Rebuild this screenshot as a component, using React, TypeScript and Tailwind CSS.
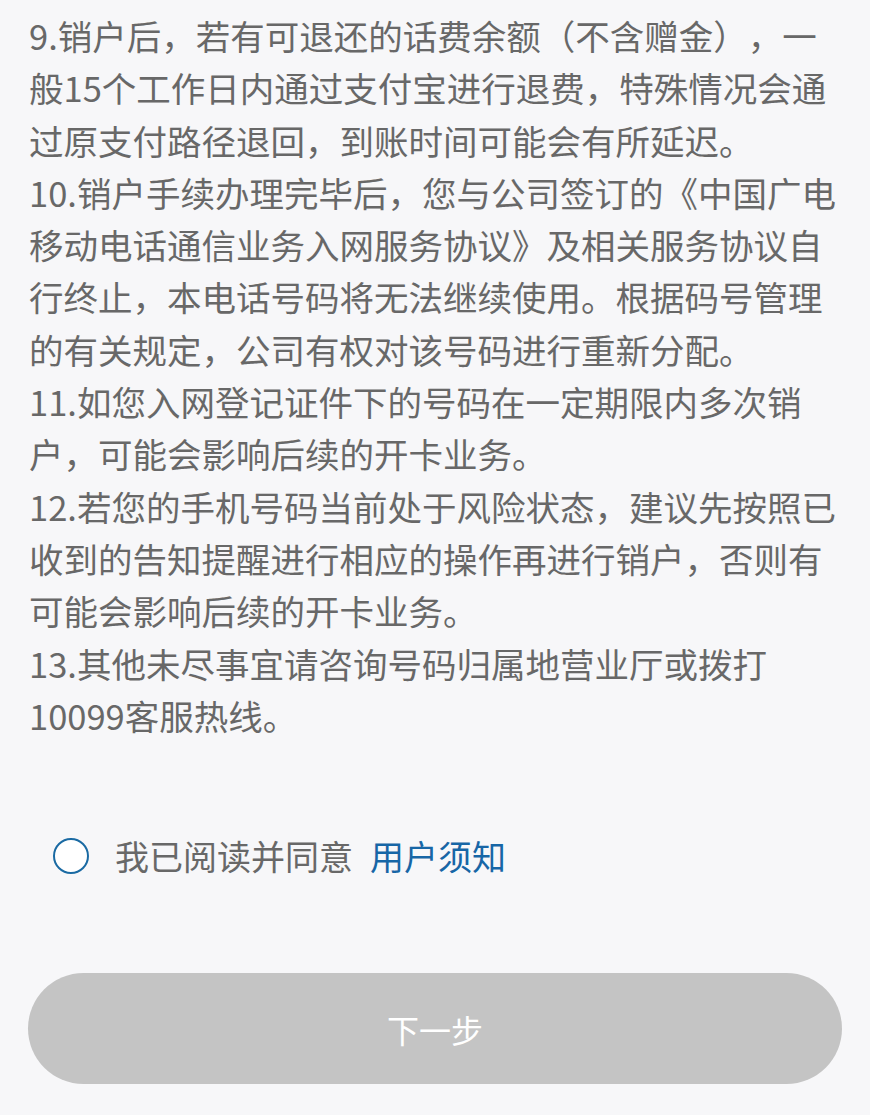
import React from "react";

const lines: string[][] = [
  [
    "9.销户后，若有可退还的话费余额（不含赠金），一",
    "般15个工作日内通过支付宝进行退费，特殊情况会通",
    "过原支付路径退回，到账时间可能会有所延迟。",
  ],
  [
    "10.销户手续办理完毕后，您与公司签订的《中国广电",
    "移动电话通信业务入网服务协议》及相关服务协议自",
    "行终止，本电话号码将无法继续使用。根据码号管理",
    "的有关规定，公司有权对该号码进行重新分配。",
  ],
  ["11.如您入网登记证件下的号码在一定期限内多次销", "户，可能会影响后续的开卡业务。"],
  [
    "12.若您的手机号码当前处于风险状态，建议先按照已",
    "收到的告知提醒进行相应的操作再进行销户，否则有",
    "可能会影响后续的开卡业务。",
  ],
  ["13.其他未尽事宜请咨询号码归属地营业厅或拨打", "10099客服热线。"],
];

export default function App() {
  return (
    <div
      className="min-h-[1115px] w-full bg-[#f7f7f9] text-[#686868] [text-spacing-trim:space-all]"
      style={{ fontFamily: '"Noto Sans CJK SC", "Noto Sans", sans-serif' }}
    >
      <div className="px-[29px] pt-[9px] text-[34.5px] leading-[52.3px]">
        {lines.map((p, i) => (
          <p key={i}>
            {p.map((l, j) => (
              <span key={j} className="block whitespace-nowrap">
                {l}
              </span>
            ))}
          </p>
        ))}
      </div>

      <div className="mt-[97px] flex items-center pl-[53px]">
        <div className="h-[36px] w-[36px] rounded-full border-[2.5px] border-[#1a6aa3] bg-white" />
        <div className="ml-[26px] text-[34px] leading-[36px] whitespace-nowrap">
          我已阅读并同意<span className="ml-[17px] text-[#1766a6]">用户须知</span>
        </div>
      </div>

      <div className="mx-[28px] mt-[99px] flex h-[111px] items-center justify-center rounded-full bg-[#c4c4c4]">
        <span className="text-[32px] text-white">下一步</span>
      </div>
    </div>
  );
}
